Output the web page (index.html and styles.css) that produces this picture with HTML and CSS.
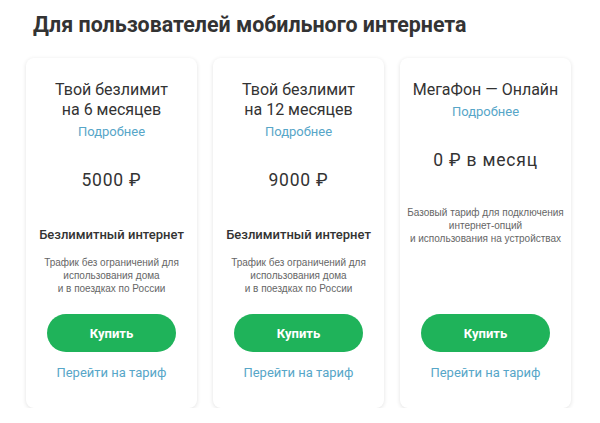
FILE: index.html
```html
<!DOCTYPE html>
<html lang="ru">
<head>
    <meta charset="UTF-8">
    <meta name="viewport" content="width=device-width, initial-scale=1.0">
    <title>Для пользователей мобильного интернета</title>
    <link rel="stylesheet" href="styles.css">
</head>
<body>
    <div class="page">
        <h1 class="section-title">Для пользователей мобильного интернета</h1>
        <div class="tariffs">
            <div class="card">
                <div class="card-name">Твой безлимит<br>на 6 месяцев</div>
                <a class="more" href="#">Подробнее</a>
                <div class="price">5000 ₽</div>
                <div class="feature">Безлимитный интернет</div>
                <div class="desc">Трафик без ограничений для<br>использования дома<br>и в поездках по России</div>
                <div class="actions">
                    <button class="buy">Купить</button>
                    <a class="go" href="#">Перейти на тариф</a>
                </div>
            </div>
            <div class="card">
                <div class="card-name">Твой безлимит<br>на 12 месяцев</div>
                <a class="more" href="#">Подробнее</a>
                <div class="price">9000 ₽</div>
                <div class="feature">Безлимитный интернет</div>
                <div class="desc">Трафик без ограничений для<br>использования дома<br>и в поездках по России</div>
                <div class="actions">
                    <button class="buy">Купить</button>
                    <a class="go" href="#">Перейти на тариф</a>
                </div>
            </div>
            <div class="card">
                <div class="card-name">МегаФон — Онлайн</div>
                <a class="more" href="#">Подробнее</a>
                <div class="price">0 ₽ в месяц</div>
                <div class="desc desc-plain">Базовый тариф для подключения<br>интернет-опций<br>и использования на устройствах</div>
                <div class="actions">
                    <button class="buy">Купить</button>
                    <a class="go" href="#">Перейти на тариф</a>
                </div>
            </div>
        </div>
    </div>
</body>
</html>
```

FILE: styles.css
```css
body {
    margin: 0;
    background-color: #fff;
    color: #333;
    font-family: Roboto, 'Noto Sans', sans-serif;
}

.page {
    padding: 11px 28px 0 26px;
}

.section-title {
    margin: 0 0 19px 7px;
    font-size: 21.4px;
    line-height: 28px;
    font-weight: 700;
    color: #333;
}

.tariffs {
    display: flex;
    gap: 16px;
}

.card {
    width: 171px;
    height: 350px;
    box-sizing: border-box;
    padding: 22px 4px 27px;
    display: flex;
    flex-direction: column;
    align-items: center;
    text-align: center;
    white-space: nowrap;
    background: #fff;
    border-radius: 8px;
    box-shadow: 0 1px 4px rgba(0, 0, 0, 0.12);
}

.card-name {
    font-size: 16px;
    line-height: 20px;
    color: #333;
}

a {
    color: #57a6c8;
    text-decoration: none;
}

.more {
    margin-top: 4px;
    font-size: 13px;
    line-height: 16px;
}

.price {
    margin-top: 29px;
    font-size: 17.5px;
    line-height: 22px;
    letter-spacing: 0.8px;
    color: #333;
}

.feature {
    margin-top: 35px;
    font-size: 13px;
    line-height: 18px;
    font-weight: 500;
    color: #333;
}

.desc {
    margin-top: 12px;
    font-family: 'Liberation Sans', Arial, sans-serif;
    font-size: 10px;
    line-height: 13px;
    color: #666;
}

.desc-plain {
    margin-top: 35px;
}

.actions {
    margin-top: auto;
    display: flex;
    flex-direction: column;
    align-items: center;
}

.buy {
    width: 129px;
    height: 38px;
    border: none;
    border-radius: 19px;
    background-color: #1fb35a;
    color: #fff;
    font-family: Roboto, 'Noto Sans', sans-serif;
    font-size: 13px;
    font-weight: 700;
    cursor: pointer;
}

.go {
    margin-top: 13px;
    font-size: 13px;
    line-height: 16px;
}
```
